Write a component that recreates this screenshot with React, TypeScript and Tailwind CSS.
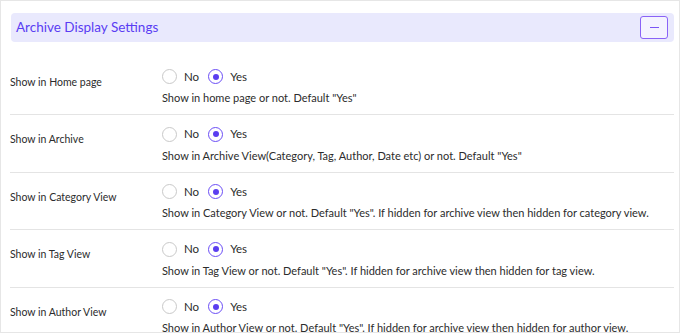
import React from 'react';

interface SettingRowProps {
  label: string;
  description: string;
  last?: boolean;
}

const Radio: React.FC<{ checked?: boolean; label: string }> = ({ checked, label }) => (
  <label className="flex items-center gap-[7px]">
    <span
      className={`flex h-[15px] w-[15px] items-center justify-center rounded-full border bg-white ${
        checked ? 'border-[#6b4ef6]' : 'border-[#c9c9c9]'
      }`}
    >
      {checked && <span className="h-[6px] w-[6px] rounded-full bg-[#5b3ef0]" />}
    </span>
    <span className="text-[11.5px] leading-none text-[#2c2c2c]">{label}</span>
  </label>
);

const SettingRow: React.FC<SettingRowProps> = ({ label, description, last }) => (
  <div className={`flex pt-[11px] pb-[8px] ${last ? '' : 'border-b border-[#e4e4e4]'}`}>
    <div className="w-[152px] shrink-0 pt-[5px] text-[10.5px] leading-[16px] text-[#2c2c2c]">{label}</div>
    <div className="flex flex-col">
      <div className="flex h-[16px] items-center gap-[9px]">
        <Radio label="No" />
        <Radio label="Yes" checked />
      </div>
      <div className="mt-[5.5px] h-[16px] whitespace-nowrap text-[11px] leading-[16px] text-[#2c2c2c]">
        {description}
      </div>
    </div>
  </div>
);

const rows = [
  { label: 'Show in Home page', description: 'Show in home page or not. Default "Yes"' },
  {
    label: 'Show in Archive',
    description: 'Show in Archive View(Category, Tag, Author, Date etc) or not. Default "Yes"',
  },
  {
    label: 'Show in Category View',
    description:
      'Show in Category View or not. Default "Yes". If hidden for archive view then hidden for category view.',
  },
  {
    label: 'Show in Tag View',
    description: 'Show in Tag View or not. Default "Yes". If hidden for archive view then hidden for tag view.',
  },
  {
    label: 'Show in Author View',
    description:
      'Show in Author View or not. Default "Yes". If hidden for archive view then hidden for author view.',
  },
];

export default function App() {
  return (
    <div
      className="h-[333px] w-[680px] overflow-hidden border border-[#e6e6e6] bg-white pl-[9px] pr-[5px]"
      style={{ fontFamily: 'Lato, sans-serif' }}
    >
      <div className="mt-[12px] ml-[1px] flex h-[29px] items-center justify-between rounded-[4px] bg-[#e9e9fd] pl-[5px] pr-[6px]">
        <h2 className="text-[13.5px] leading-none text-[#5a3df3]">Archive Display Settings</h2>
        <button className="flex h-[23px] w-[28px] items-center justify-center rounded-[3px] border-[1.5px] border-[#8a63f7] bg-[#f4f3ff]">
          <span className="h-[1.5px] w-[9px] bg-[#7b55f5]" />
        </button>
      </div>
      <div className="mt-[15.5px]">
        {rows.map((r, i) => (
          <SettingRow key={r.label} label={r.label} description={r.description} last={i === rows.length - 1} />
        ))}
      </div>
    </div>
  );
}
